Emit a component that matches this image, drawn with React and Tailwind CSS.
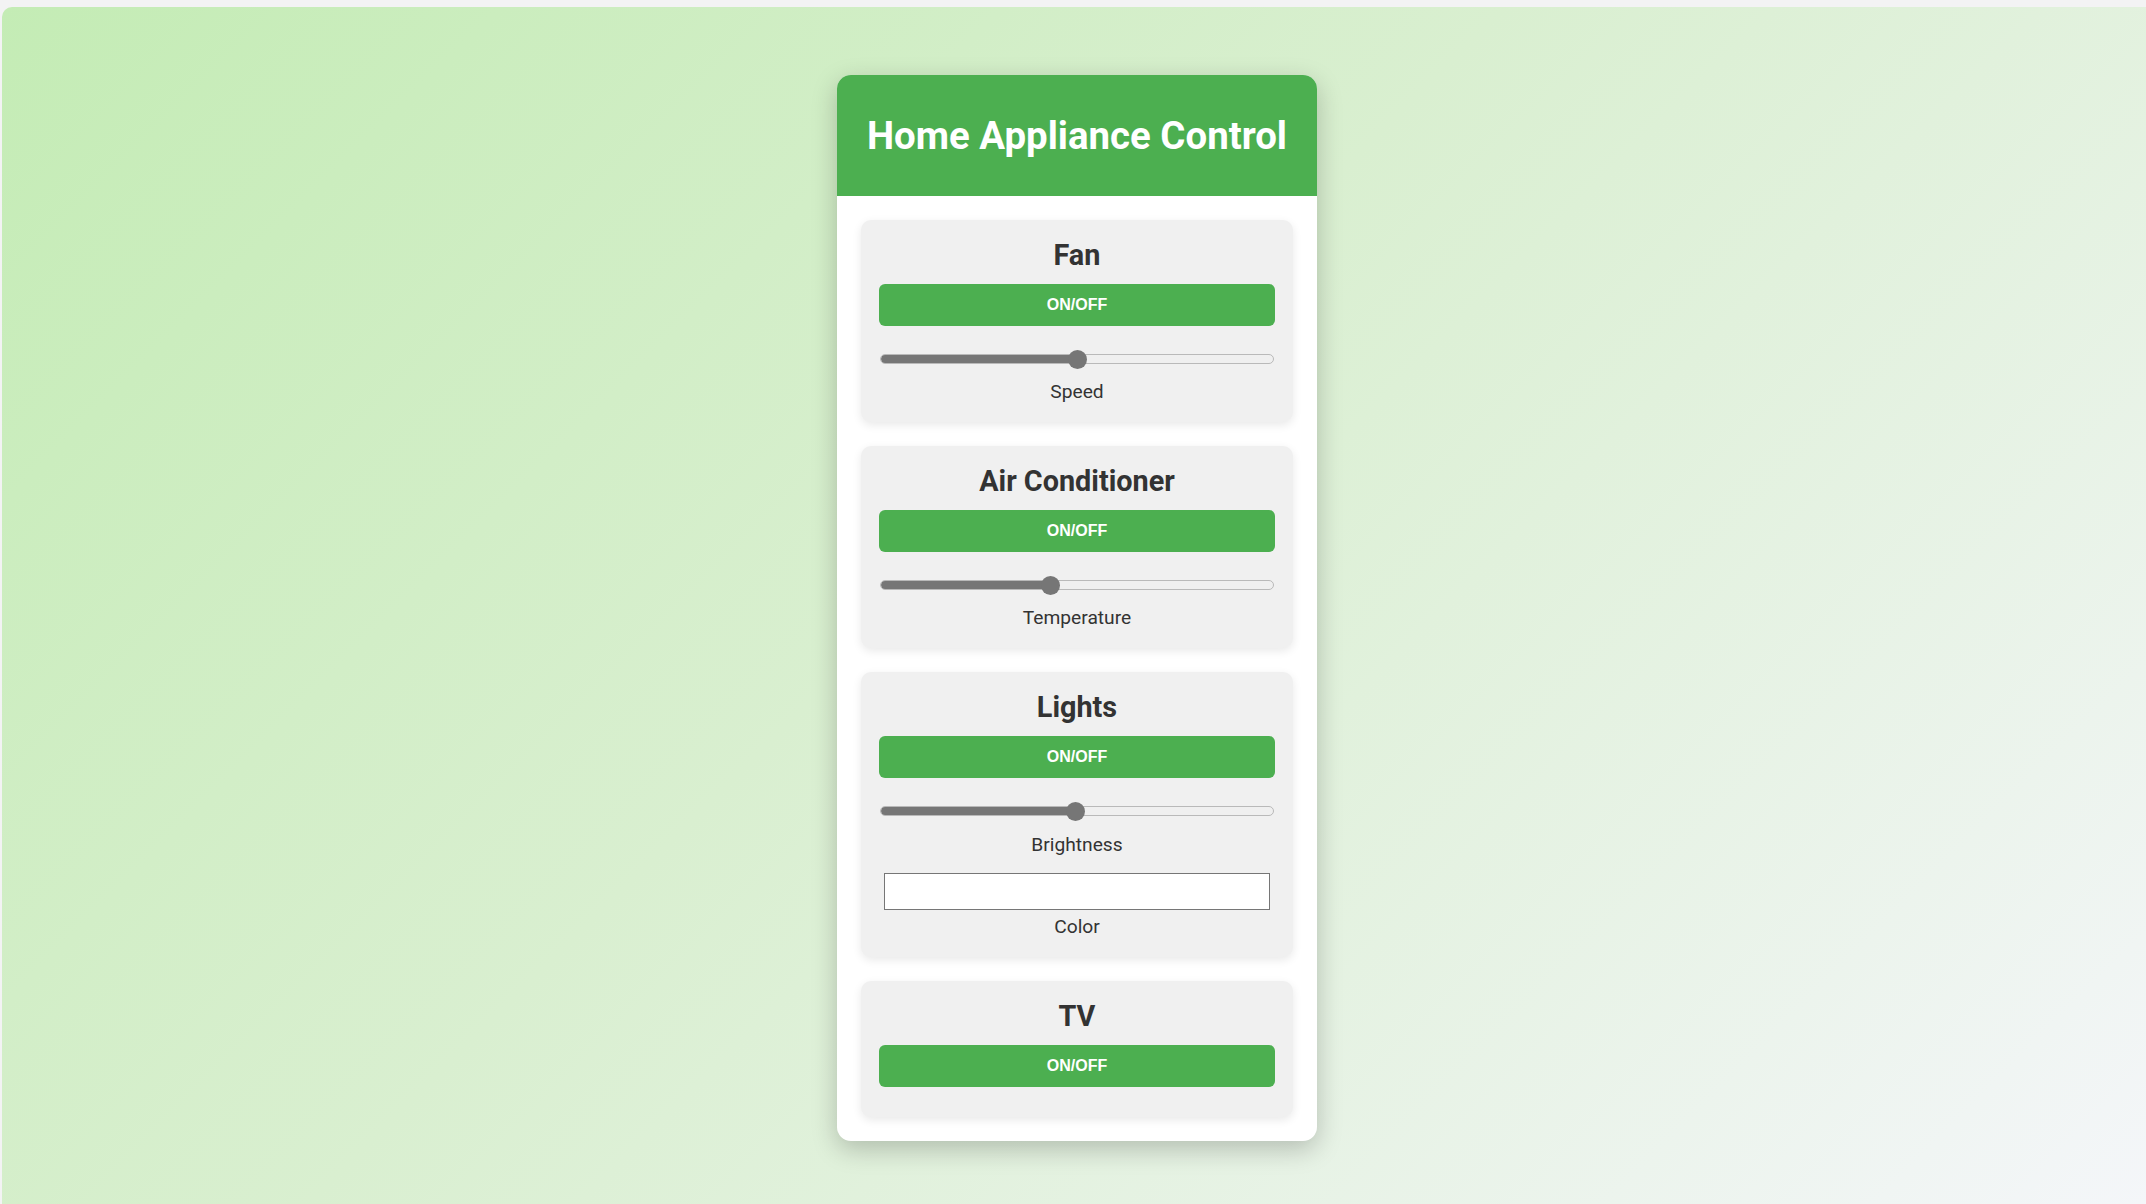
import React from "react";

const FONT = { fontFamily: "Roboto, 'Noto Sans', Arial, sans-serif" };

function Slider({ value }) {
  const W = 394;
  const T = 19;
  const center = T / 2 + value * (W - T);
  return (
    <div className="relative mx-[1px] mt-[11px] flex h-[20px] items-center">
      <div className="relative h-[10px] w-full overflow-hidden rounded-full border border-[#b9b9b9] bg-[#efefef]">
        <div
          className="absolute left-0 top-[-1px] bottom-[-1px] rounded-full bg-[#767676]"
          style={{ width: center + 2 }}
        />
      </div>
      <div
        className="absolute top-[0.5px] h-[19px] w-[19px] rounded-full bg-[#767676]"
        style={{ left: center - T / 2 }}
      />
    </div>
  );
}

function Label({ children }) {
  return (
    <div className="text-center text-[19.2px] leading-[24px] text-[#333333]">{children}</div>
  );
}

function Panel({ title, children }) {
  return (
    <div className="flex flex-col rounded-[10px] bg-[#f0f0f0] px-[18px] pt-[18px] pb-[18px] shadow-[0_3px_10px_rgba(0,0,0,0.09)]">
      <h2 className="text-center text-[28.8px] font-bold leading-[34px] text-[#333333]">{title}</h2>
      <button
        className="mt-[12px] mb-[12px] flex h-[42px] w-full items-center justify-center rounded-[6px] bg-[#4caf50] text-[16px] font-bold text-white"
        style={{ fontFamily: "'Liberation Sans', Arial, sans-serif" }}
      >
        ON/OFF
      </button>
      {children}
    </div>
  );
}

export default function App() {
  return (
    <div className="h-[1204px] w-full overflow-hidden bg-[#f3f3f4] pl-[2px] pt-[7px]" style={FONT}>
      <div className="h-full w-full rounded-tl-[10px] bg-[linear-gradient(135deg,#c4ecb5_0%,#d9efd0_45%,#f4f6f9_100%)] pl-[835px] pt-[68px]">
        <div className="w-[480px] overflow-hidden rounded-[14px] bg-white shadow-[0_8px_26px_rgba(0,0,0,0.22)]">
          <div className="flex h-[121px] items-center justify-center bg-[#4caf50]">
            <h1 className="text-[38.4px] font-bold leading-[45px] text-white">Home Appliance Control</h1>
          </div>
          <div className="flex flex-col gap-[24px] p-[24px]">
            <Panel title="Fan">
              <Slider value={0.5} />
              <div className="mt-[11px]">
                <Label>Speed</Label>
              </div>
            </Panel>
            <Panel title="Air Conditioner">
              <Slider value={6 / 14} />
              <div className="mt-[11px]">
                <Label>Temperature</Label>
              </div>
            </Panel>
            <Panel title="Lights">
              <Slider value={0.495} />
              <div className="mt-[12px]">
                <Label>Brightness</Label>
              </div>
              <div className="mx-[5px] mt-[16px] h-[37px] border border-[#767676] bg-white" />
              <div className="mt-[5px]">
                <Label>Color</Label>
              </div>
            </Panel>
            <Panel title="TV" />
          </div>
        </div>
      </div>
    </div>
  );
}
